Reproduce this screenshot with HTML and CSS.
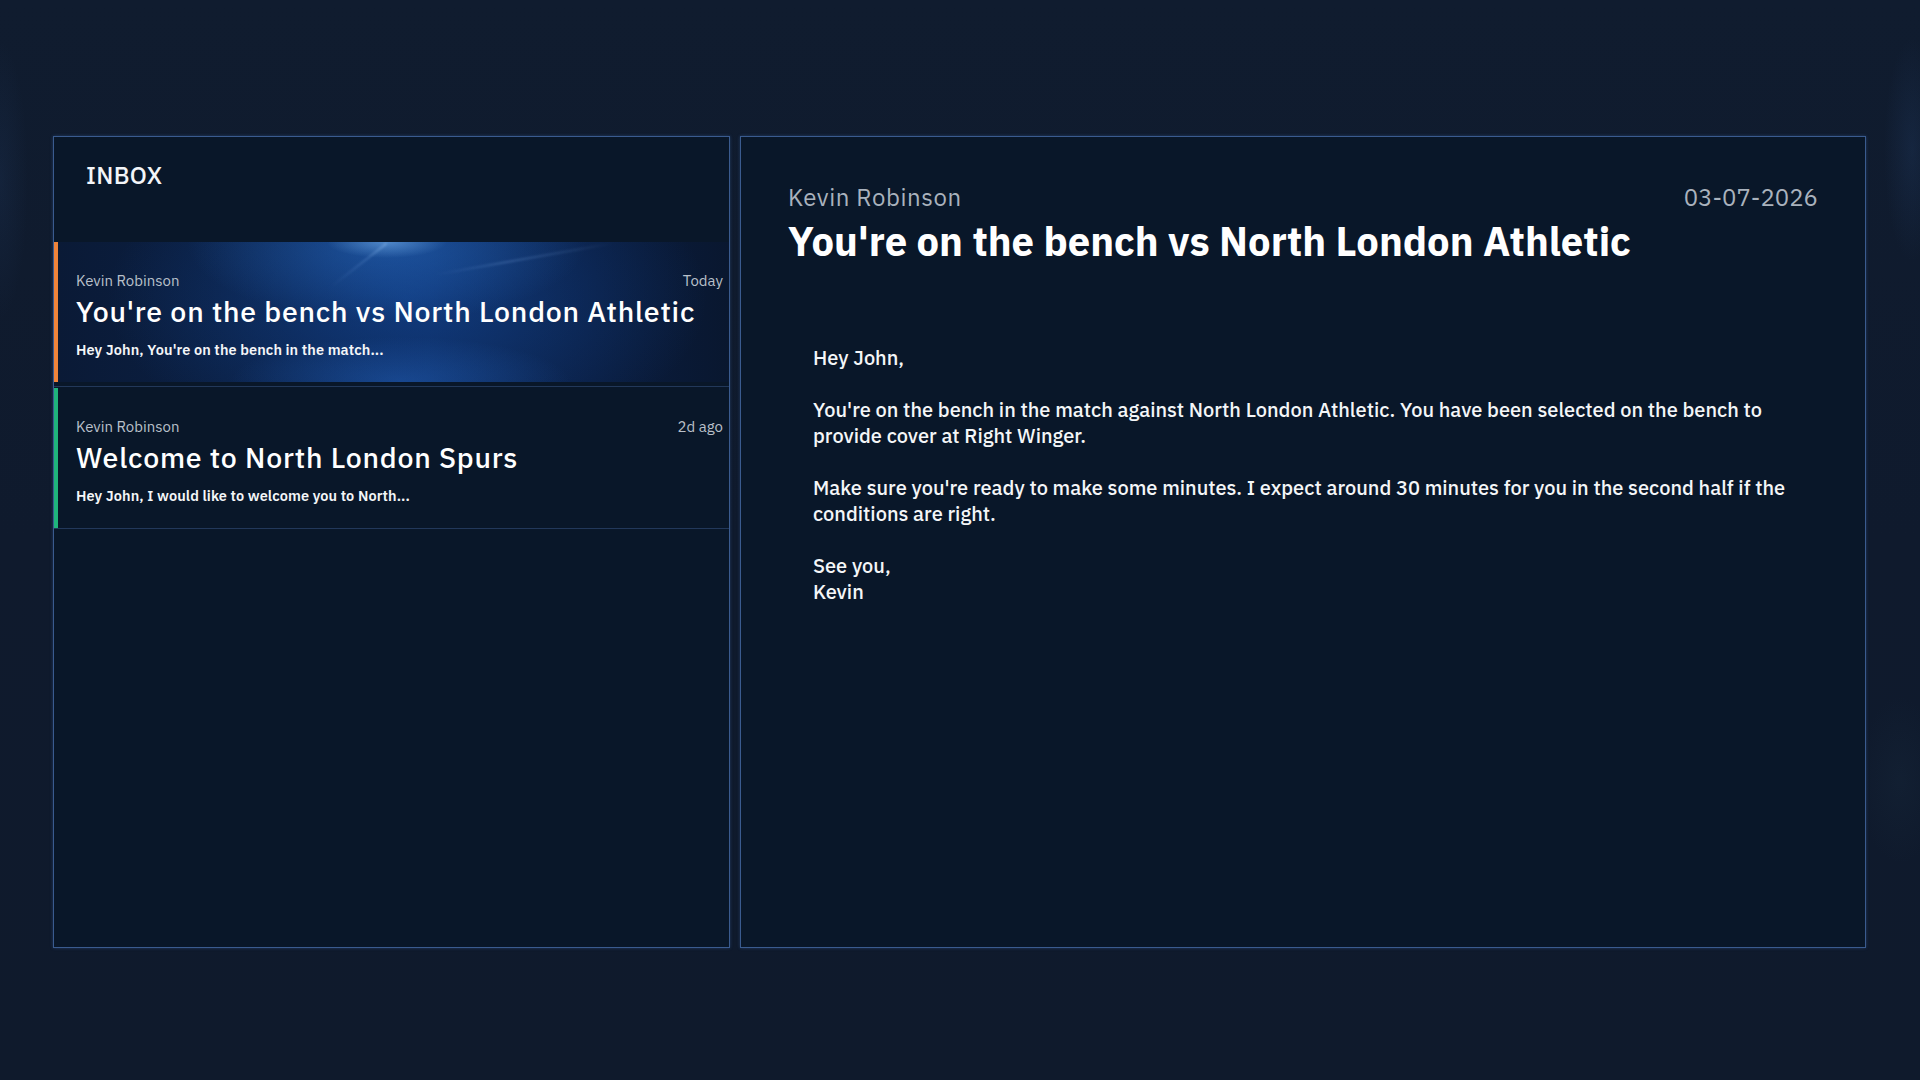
FILE: index.html
```html
<!DOCTYPE html>
<html lang="en">
<head>
<meta charset="utf-8">
<title>Inbox</title>
<link rel="stylesheet" href="styles.css">
</head>
<body>
<div class="app">
  <section class="inbox">
    <header class="inbox-head">INBOX</header>
    <div class="list">
      <div class="item item--active">
        <div class="item-inner bar-orange">
          <div class="item-meta"><span class="sender">Kevin Robinson</span><span class="when">Today</span></div>
          <div class="item-title">You're on the bench vs North London Athletic</div>
          <div class="item-preview">Hey John, You're on the bench in the match...</div>
        </div>
      </div>
      <div class="item">
        <div class="item-inner bar-green">
          <div class="item-meta"><span class="sender">Kevin Robinson</span><span class="when">2d ago</span></div>
          <div class="item-title">Welcome to North London Spurs</div>
          <div class="item-preview">Hey John, I would like to welcome you to North...</div>
        </div>
      </div>
    </div>
  </section>
  <section class="reader">
    <div class="reader-meta"><span class="reader-from">Kevin Robinson</span><span class="reader-date">03-07-2026</span></div>
    <h1 class="reader-title">You're on the bench vs North London Athletic</h1>
    <div class="reader-body">
      <p>Hey John,</p>
      <p>You're on the bench in the match against North London Athletic. You have been selected on the bench to provide cover at Right Winger.</p>
      <p>Make sure you're ready to make some minutes. I expect around 30 minutes for you in the second half if the conditions are right.</p>
      <p>See you,<br>Kevin</p>
    </div>
  </section>
</div>
</body>
</html>
```

FILE: styles.css
```css
* { box-sizing: border-box; }
html, body { margin: 0; padding: 0; }
body {
  width: 1920px;
  height: 1080px;
  overflow: hidden;
  font-family: "IBM Plex Sans", "Noto Sans", "Liberation Sans", sans-serif;
  color: #f3f5f8;
  background:
    radial-gradient(ellipse 40px 160px at 1912px 150px, rgba(50,90,150,0.16), transparent 70%),
    radial-gradient(ellipse 40px 200px at 0px 180px, rgba(50,90,150,0.12), transparent 70%),
    radial-gradient(ellipse 60px 120px at 1900px 780px, rgba(40,70,90,0.12), transparent 70%),
    linear-gradient(180deg, #101c2f 0%, #0f1a2d 50%, #0f1a2c 100%);
}
.app {
  display: flex;
  gap: 10px;
  height: 1080px;
  padding: 136px 54px 132px 53px;
}
.inbox, .reader {
  background: #091729;
  border: 1px solid #3a5b8f;
  box-shadow: 0 0 3px rgba(70, 120, 200, 0.35);
}
.inbox {
  width: 677px;
  flex: none;
  display: flex;
  flex-direction: column;
}
.inbox-head {
  height: 105px;
  padding: 22px 0 0 32px;
  font-size: 24px;
  line-height: 32px;
  font-weight: 500;
  letter-spacing: 0.3px;
}
.list {
  display: flex;
  flex-direction: column;
  gap: 1px;
}
.item {
  border-bottom: 1px solid #22385a;
}
.item--active {
  padding-bottom: 4px;
}
.item-inner {
  height: 140px;
  padding: 29px 6px 0 18px;
  border-left: 4px solid transparent;
  position: relative;
  overflow: hidden;
}
.item-inner > * { position: relative; z-index: 1; }
.bar-orange { border-left-color: #f0843a; }
.bar-green { border-left-color: #1fb57c; }
.item--active .item-inner {
  background:
    radial-gradient(ellipse 60px 16px at 49% 0%, rgba(140,200,255,0.45), transparent 100%),
    radial-gradient(ellipse 200px 80px at 49% 0%, rgba(50,130,230,0.40), transparent 100%),
    radial-gradient(ellipse 170px 45px at 51% 100%, rgba(40,110,210,0.38), transparent 100%),
    radial-gradient(ellipse 300px 160px at 52% 40%, rgba(20,75,160,0.55), transparent 100%),
    linear-gradient(90deg, #0a1a36 0%, #0b2147 35%, #0c2653 55%, #0a1d40 80%, #09172f 100%);
}
.item--active .item-inner::before {
  content: "";
  position: absolute;
  left: 376px;
  top: 16px;
  width: 180px;
  height: 2px;
  transform: rotate(-10deg);
  background: linear-gradient(90deg, transparent, rgba(150,195,255,0.22) 40%, rgba(150,195,255,0.1) 80%, transparent);
  filter: blur(0.8px);
}
.item--active .item-inner::after {
  content: "";
  position: absolute;
  left: 266px;
  top: 22px;
  width: 70px;
  height: 2px;
  transform: rotate(-38deg);
  background: linear-gradient(90deg, transparent, rgba(150,195,255,0.18) 60%, rgba(170,210,255,0.35));
  filter: blur(0.8px);
}
.item-meta {
  display: flex;
  justify-content: space-between;
  font-size: 15px;
  line-height: 20px;
  color: #b9c0ca;
}
.item-title {
  margin-top: 3px;
  font-size: 28.5px;
  line-height: 36px;
  font-weight: 500;
  letter-spacing: 0.75px;
  color: #ffffff;
  white-space: nowrap;
}
.item-preview {
  margin-top: 10px;
  font-size: 14.5px;
  line-height: 20px;
  font-weight: 600;
  letter-spacing: 0.1px;
  color: #f4f6f8;
}
.reader {
  flex: 1;
  padding: 45px 47px 0 47px;
}
.reader-meta {
  display: flex;
  justify-content: space-between;
  font-size: 24px;
  line-height: 30px;
  color: #a9b2bd;
}
.reader-from { letter-spacing: 0.6px; }
.reader-title {
  margin: 5px 0 0;
  font-size: 40px;
  line-height: 48px;
  font-weight: 700;
  color: #ffffff;
}
.reader-body {
  margin-top: 80px;
  padding-left: 25px;
  padding-right: 25px;
  font-size: 20px;
  line-height: 26px;
  font-weight: 500;
  color: #f4f6f8;
}
.reader-body p { margin: 0 0 26px; }
```
